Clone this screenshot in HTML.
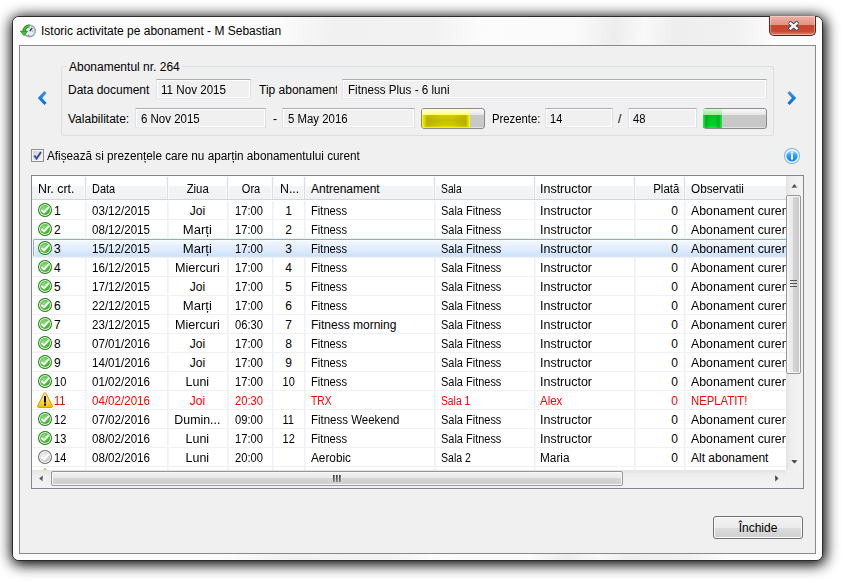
<!DOCTYPE html>
<html><head><meta charset="utf-8"><style>
*{margin:0;padding:0;box-sizing:border-box}
html,body{width:848px;height:581px;overflow:hidden;background:#fff;font-family:"Liberation Sans",sans-serif;font-size:12px;color:#000}
.a{position:absolute}
.t{position:absolute;line-height:14px;white-space:nowrap}
.tb{position:absolute;border:1px solid #abadb3;border-color:#abadb3 #dbdfe6 #e3e9ef #e2e3ea;background:#f0f0f0;box-shadow:inset 0 0 0 1px #fff}
.pb{position:absolute;border:1px solid #8a8a8a;border-radius:3px;background:linear-gradient(#fbfbfb 0,#f0f0f0 15%,#e4e4e4 31%,#cacaca 32%,#c6c6c6 92%,#eeeeee 100%);overflow:hidden}
.hs{position:absolute;top:177px;width:1px;height:22px;background:#dcdde0;box-shadow:-1px 0 0 #fafafa,1px 0 0 #fafafa}
.vg{position:absolute;width:1px;background:#eaf1fb}
.vg2{position:absolute;width:1px;background:#f6f6f6}
.hg{position:absolute;height:1px;background:#f0f0f0}
</style></head><body>

<div class="a" style="left:12px;top:16px;width:811px;height:545px;border-radius:7px;box-shadow:1px 2px 14px 2px rgba(0,0,0,1);background:#fbfbfb;border:1px solid #2c2c2c"></div>
<div class="a" style="left:13px;top:17px;width:809px;height:543px;border-radius:6px;background:linear-gradient(95deg,#fdfdfd 0px,#fcfcfc 260px,#f1f1f1 320px,#f2f2f2 420px,#fcfcfc 470px,#fbfbfb 560px,#ededed 600px,#f9f9f9 630px,#eeeeee 660px,#f1f1f1 720px,#fcfcfc 760px)"></div>
<svg class="a" style="left:19px;top:23px" width="17" height="17" viewBox="0 0 17 17">
<circle cx="10.6" cy="8" r="6.4" fill="#98a2ac"/><circle cx="10.6" cy="8" r="5" fill="#dcf0fb"/>
<path d="M10.8 8.2 L13.2 4.8" stroke="#2a2a2a" stroke-width="1.3"/><circle cx="9.6" cy="12.2" r="0.8" fill="#f05a28"/><circle cx="13.6" cy="8" r="0.7" fill="#f08050"/>
<path d="M10.4 3 A5.2 5.2 0 0 0 5 8.4" fill="none" stroke="#1f7d14" stroke-width="3.2"/>
<path d="M10.4 3 A5.2 5.2 0 0 0 5 8.4" fill="none" stroke="#49c032" stroke-width="1.8"/>
<path d="M1.4 8.2 L8.6 8.2 L5 12.6Z" fill="#4cc236" stroke="#1f7d14" stroke-width="0.8" stroke-linejoin="round"/>
</svg>
<div class="t" style="left:41px;top:24px;">Istoric activitate pe abonament - M Sebastian</div>
<div class="a" style="left:769px;top:16px;width:47px;height:20px;border:1px solid #5b2219;border-top:none;border-radius:0 0 5px 5px;background:linear-gradient(#eeb1a6 0%,#e29483 45%,#c8472d 50%,#c54a31 80%,#e58a72 100%);box-shadow:inset 0 0 0 1px rgba(255,255,255,0.35)"></div>
<svg class="a" style="left:787px;top:20px" width="14" height="12" viewBox="0 0 14 12"><path d="M3.6 3.4 L9.6 8.4 M9.6 3.4 L3.6 8.4" stroke="#3a465c" stroke-width="4.4" stroke-linecap="round"/><path d="M3.6 3.4 L9.6 8.4 M9.6 3.4 L3.6 8.4" stroke="#f6f6f6" stroke-width="2.5" stroke-linecap="square"/></svg>
<div class="a" style="left:19px;top:45px;width:797px;height:509px;border:1px solid #8a8a8a;background:#f0f0f0"></div>
<div class="a" style="left:61px;top:66px;width:713px;height:70px;border:1px solid #d5dfe5;border-radius:3px"></div>
<div class="a" style="left:67px;top:60px;width:115px;height:10px;background:#f0f0f0"></div>
<div class="t" style="left:69px;top:60px;">Abonamentul nr. 264</div>
<svg class="a" style="left:36px;top:90px" width="13" height="16" viewBox="0 0 13 16"><defs><linearGradient id="arl" x1="0" y1="0" x2="0" y2="1"><stop offset="0" stop-color="#5a8ccc"/><stop offset="0.5" stop-color="#0a80f4"/><stop offset="1" stop-color="#1a6fd8"/></linearGradient></defs><path d="M9.5 2 L4 8 L9.5 14" fill="none" stroke="url(#arl)" stroke-width="3.2"/></svg>
<svg class="a" style="left:785px;top:90px" width="13" height="16" viewBox="0 0 13 16"><defs><linearGradient id="arr" x1="0" y1="0" x2="0" y2="1"><stop offset="0" stop-color="#5a8ccc"/><stop offset="0.5" stop-color="#0a80f4"/><stop offset="1" stop-color="#1a6fd8"/></linearGradient></defs><path d="M3.5 2 L9 8 L3.5 14" fill="none" stroke="url(#arr)" stroke-width="3.2"/></svg>
<div class="t" style="left:68px;top:83px;">Data document</div>
<div class="tb" style="left:156px;top:79px;width:95px;height:20px"></div>
<div class="t" style="left:161px;top:83px;"><span style="display:inline-block;transform:scaleX(0.968);transform-origin:left">11 Nov 2015</span></div>
<div class="t" style="left:259px;top:83px;width:78px;overflow:hidden">Tip abonament</div>
<div class="tb" style="left:342px;top:79px;width:425px;height:20px"></div>
<div class="t" style="left:348px;top:83px;"><span style="display:inline-block;transform:scaleX(0.97);transform-origin:left">Fitness Plus - 6 luni</span></div>
<div class="t" style="left:68px;top:112px;">Valabilitate:</div>
<div class="tb" style="left:135px;top:108px;width:131px;height:20px"></div>
<div class="t" style="left:141px;top:112px;"><span style="display:inline-block;transform:scaleX(0.956);transform-origin:left">6 Nov 2015</span></div>
<div class="t" style="left:273px;top:112px;">-</div>
<div class="tb" style="left:282px;top:108px;width:133px;height:20px"></div>
<div class="t" style="left:288px;top:112px;"><span style="display:inline-block;transform:scaleX(0.95);transform-origin:left">5 May 2016</span></div>
<div class="pb" style="left:421px;top:108px;width:64px;height:21px"><div class="a" style="left:0;top:0;width:48px;height:19px;background:linear-gradient(#ffffd8 0,#ffffa0 20%,#ffff70 31%,#d2cc00 32%,#c4be00 60%,#d0ca00 88%,#ffff00 100%)"></div><div class="a" style="left:0;top:6px;width:48px;height:12px;background:linear-gradient(90deg,#ffff00 0,#f0ec00 1px,rgba(170,164,0,0.55) 5px,rgba(170,164,0,0.25) 12px,rgba(0,0,0,0) 20px,rgba(0,0,0,0) 30px,rgba(170,164,0,0.3) 38px,rgba(170,164,0,0.55) 44px,#f0ec00 47px,#ffff00 48px)"></div></div>
<div class="t" style="left:492px;top:112px;"><span style="display:inline-block;transform:scaleX(0.942);transform-origin:left">Prezente:</span></div>
<div class="tb" style="left:545px;top:108px;width:68px;height:20px"></div>
<div class="t" style="left:550px;top:112px;"><span style="display:inline-block;transform:scaleX(0.92);transform-origin:left">14</span></div>
<div class="t" style="left:618px;top:112px;">/</div>
<div class="tb" style="left:628px;top:108px;width:69px;height:20px"></div>
<div class="t" style="left:633px;top:112px;"><span style="display:inline-block;transform:scaleX(0.93);transform-origin:left">48</span></div>
<div class="pb" style="left:703px;top:108px;width:64px;height:21px;overflow:visible"><div class="a" style="left:-1px;top:0;width:19px;height:19px;border-radius:2px 0 0 2px;background:linear-gradient(#d8ffd8 0,#b0f4b0 15%,#a0e8a0 31%,#00c020 32%,#00cc24 60%,#00d028 85%,#20e840 100%)"></div><div class="a" style="left:-1px;top:6px;width:19px;height:13px;background:linear-gradient(90deg,#30e850 0,rgba(0,150,20,0.5) 3px,rgba(0,0,0,0) 7px,rgba(0,0,0,0) 12px,rgba(0,150,20,0.5) 16px,#30e850 19px)"></div></div>
<div class="a" style="left:31px;top:149px;width:13px;height:13px;border:1px solid #8e8f8f;background:linear-gradient(135deg,#cbcfd5,#f6f6f6);box-shadow:inset 0 0 0 1px #f4f4f4"></div>
<svg class="a" style="left:32px;top:150px" width="11" height="11" viewBox="0 0 11 11"><path d="M2.3 5.5 L4.5 8.5 L9 2" fill="none" stroke="#34489c" stroke-width="1.9"/></svg>
<div class="t" style="left:47px;top:149px;"><span style="display:inline-block;transform:scaleX(0.979);transform-origin:left">Afișează si prezențele care nu aparțin abonamentului curent</span></div>
<svg class="a" style="left:783px;top:147px" width="18" height="18" viewBox="0 0 18 18"><defs><linearGradient id="ig" x1="0" y1="0" x2="0" y2="1"><stop offset="0" stop-color="#b8e8ff"/><stop offset="0.45" stop-color="#2a9cff"/><stop offset="1" stop-color="#0a84f8"/></linearGradient></defs>
<circle cx="9" cy="9" r="8" fill="#7eaee6"/><circle cx="9" cy="9" r="7" fill="#fbfdff"/><circle cx="9" cy="9" r="5.6" fill="url(#ig)"/><rect x="8" y="7.2" width="2" height="5.4" fill="#fff"/><rect x="8" y="4.6" width="2" height="1.7" fill="#fff"/></svg>
<div class="a" style="left:31px;top:175px;width:773px;height:314px;border:1px solid #828790;background:#fff"></div>
<div class="a" style="left:32px;top:176px;width:754px;height:23px;background:linear-gradient(#ffffff 0,#ffffff 43%,#f3f4f6 44%,#f1f2f4 100%)"></div>
<div class="a" style="left:32px;top:199px;width:754px;height:1px;background:#d5d5d5"></div>
<div class="hs" style="left:85px"></div>
<div class="hs" style="left:167px"></div>
<div class="hs" style="left:227px"></div>
<div class="hs" style="left:272px"></div>
<div class="hs" style="left:304px"></div>
<div class="hs" style="left:434px"></div>
<div class="hs" style="left:534px"></div>
<div class="hs" style="left:634px"></div>
<div class="hs" style="left:684px"></div>
<div class="t" style="left:38px;top:182px;"><span style="display:inline-block;transform:scaleX(1.03);transform-origin:left">Nr. crt.</span></div>
<div class="t" style="left:92px;top:182px;"><span style="display:inline-block;transform:scaleX(0.91);transform-origin:left">Data</span></div>
<div class="t" style="left:168px;top:182px;width:60px;text-align:center"><span style="display:inline-block;transform:scaleX(0.946);transform-origin:center">Ziua</span></div>
<div class="t" style="left:228px;top:182px;width:46px;text-align:center"><span style="display:inline-block;transform:scaleX(0.92);transform-origin:center">Ora</span></div>
<div class="t" style="left:280px;top:182px;"><span style="display:inline-block;transform:scaleX(1.03);transform-origin:left">N...</span></div>
<div class="t" style="left:311px;top:182px;">Antrenament</div>
<div class="t" style="left:441px;top:182px;"><span style="display:inline-block;transform:scaleX(0.86);transform-origin:left">Sala</span></div>
<div class="t" style="left:540px;top:182px;"><span style="display:inline-block;transform:scaleX(1.04);transform-origin:left">Instructor</span></div>
<div class="t" style="left:636px;top:182px;width:43px;text-align:right"><span style="display:inline-block;transform:scaleX(0.955);transform-origin:right">Plată</span></div>
<div class="t" style="left:691px;top:182px;"><span style="display:inline-block;transform:scaleX(0.98);transform-origin:left">Observatii</span></div>
<div class="a" style="left:32px;top:200px;width:754px;height:270px;overflow:hidden">
<div class="hg" style="left:0;top:19px;width:754px"></div>
<div class="hg" style="left:0;top:38px;width:754px"></div>
<div class="hg" style="left:0;top:57px;width:754px"></div>
<div class="hg" style="left:0;top:76px;width:754px"></div>
<div class="hg" style="left:0;top:95px;width:754px"></div>
<div class="hg" style="left:0;top:114px;width:754px"></div>
<div class="hg" style="left:0;top:133px;width:754px"></div>
<div class="hg" style="left:0;top:152px;width:754px"></div>
<div class="hg" style="left:0;top:171px;width:754px"></div>
<div class="hg" style="left:0;top:190px;width:754px"></div>
<div class="hg" style="left:0;top:209px;width:754px"></div>
<div class="hg" style="left:0;top:228px;width:754px"></div>
<div class="hg" style="left:0;top:247px;width:754px"></div>
<div class="hg" style="left:0;top:266px;width:754px"></div>
<div class="hg" style="left:0;top:285px;width:754px"></div>
<div class="vg" style="left:53px;top:1px;height:269px"></div><div class="vg2" style="left:54px;top:1px;height:269px"></div>
<div class="vg" style="left:135px;top:1px;height:269px"></div><div class="vg2" style="left:136px;top:1px;height:269px"></div>
<div class="vg" style="left:195px;top:1px;height:269px"></div><div class="vg2" style="left:196px;top:1px;height:269px"></div>
<div class="vg" style="left:240px;top:1px;height:269px"></div><div class="vg2" style="left:241px;top:1px;height:269px"></div>
<div class="vg" style="left:272px;top:1px;height:269px"></div><div class="vg2" style="left:273px;top:1px;height:269px"></div>
<div class="vg" style="left:402px;top:1px;height:269px"></div><div class="vg2" style="left:403px;top:1px;height:269px"></div>
<div class="vg" style="left:502px;top:1px;height:269px"></div><div class="vg2" style="left:503px;top:1px;height:269px"></div>
<div class="vg" style="left:602px;top:1px;height:269px"></div><div class="vg2" style="left:603px;top:1px;height:269px"></div>
<div class="vg" style="left:652px;top:1px;height:269px"></div><div class="vg2" style="left:653px;top:1px;height:269px"></div>
<div class="a" style="left:1px;top:39px;width:754px;height:18px;border:1px solid #84acdd;border-bottom-color:#d6e6f8;border-right:none;border-radius:2px 0 0 2px;background:linear-gradient(#f4f9fe 0,#e6f0fd 40%,#cfe2fa 100%);box-shadow:inset 1px 1px 0 rgba(255,255,255,0.6)"></div>
<div class="a" style="left:6px;top:3px;width:14px;height:14px"><svg width="14" height="14" viewBox="0 0 14 14"><defs><radialGradient id="g0" cx="40%" cy="35%" r="70%"><stop offset="0" stop-color="#8fe07c"/><stop offset="1" stop-color="#38a828"/></radialGradient></defs><circle cx="7" cy="7" r="7" fill="#1f7d12"/><circle cx="7" cy="7" r="6" fill="#dff6d6"/><circle cx="7" cy="7" r="5" fill="url(#g0)"/><path d="M3.9 7.4 L6 9.4 L10.2 4.6" fill="none" stroke="#fff" stroke-width="2" stroke-linecap="round" stroke-linejoin="round"/></svg></div>
<div class="t" style="left:22px;top:4px;">1</div>
<div class="t" style="left:60px;top:4px;"><span style="display:inline-block;transform:scaleX(0.965);transform-origin:left">03/12/2015</span></div>
<div class="t" style="left:136px;top:4px;width:59px;text-align:center;">Joi</div>
<div class="t" style="left:195px;top:4px;width:44px;text-align:center;"><span style="display:inline-block;transform:scaleX(0.93);transform-origin:center">17:00</span></div>
<div class="t" style="left:241px;top:4px;width:31px;text-align:center;">1</div>
<div class="t" style="left:279px;top:4px;"><span style="display:inline-block;transform:scaleX(0.93);transform-origin:left">Fitness</span></div>
<div class="t" style="left:409px;top:4px;"><span style="display:inline-block;transform:scaleX(0.914);transform-origin:left">Sala Fitness</span></div>
<div class="t" style="left:508px;top:4px;"><span style="display:inline-block;transform:scaleX(1.04);transform-origin:left">Instructor</span></div>
<div class="t" style="left:604px;top:4px;width:42px;text-align:right;">0</div>
<div class="t" style="left:659px;top:4px;"><span style="display:inline-block;transform:scaleX(1.03);transform-origin:left">Abonament curent</span></div>
<div class="a" style="left:6px;top:22px;width:14px;height:14px"><svg width="14" height="14" viewBox="0 0 14 14"><defs><radialGradient id="g1" cx="40%" cy="35%" r="70%"><stop offset="0" stop-color="#8fe07c"/><stop offset="1" stop-color="#38a828"/></radialGradient></defs><circle cx="7" cy="7" r="7" fill="#1f7d12"/><circle cx="7" cy="7" r="6" fill="#dff6d6"/><circle cx="7" cy="7" r="5" fill="url(#g1)"/><path d="M3.9 7.4 L6 9.4 L10.2 4.6" fill="none" stroke="#fff" stroke-width="2" stroke-linecap="round" stroke-linejoin="round"/></svg></div>
<div class="t" style="left:22px;top:23px;">2</div>
<div class="t" style="left:60px;top:23px;"><span style="display:inline-block;transform:scaleX(0.965);transform-origin:left">08/12/2015</span></div>
<div class="t" style="left:136px;top:23px;width:59px;text-align:center;"><span style="display:inline-block;transform:scaleX(1.09);transform-origin:center">Marți</span></div>
<div class="t" style="left:195px;top:23px;width:44px;text-align:center;"><span style="display:inline-block;transform:scaleX(0.93);transform-origin:center">17:00</span></div>
<div class="t" style="left:241px;top:23px;width:31px;text-align:center;">2</div>
<div class="t" style="left:279px;top:23px;"><span style="display:inline-block;transform:scaleX(0.93);transform-origin:left">Fitness</span></div>
<div class="t" style="left:409px;top:23px;"><span style="display:inline-block;transform:scaleX(0.914);transform-origin:left">Sala Fitness</span></div>
<div class="t" style="left:508px;top:23px;"><span style="display:inline-block;transform:scaleX(1.04);transform-origin:left">Instructor</span></div>
<div class="t" style="left:604px;top:23px;width:42px;text-align:right;">0</div>
<div class="t" style="left:659px;top:23px;"><span style="display:inline-block;transform:scaleX(1.03);transform-origin:left">Abonament curent</span></div>
<div class="a" style="left:6px;top:41px;width:14px;height:14px"><svg width="14" height="14" viewBox="0 0 14 14"><defs><radialGradient id="g2" cx="40%" cy="35%" r="70%"><stop offset="0" stop-color="#8fe07c"/><stop offset="1" stop-color="#38a828"/></radialGradient></defs><circle cx="7" cy="7" r="7" fill="#1f7d12"/><circle cx="7" cy="7" r="6" fill="#dff6d6"/><circle cx="7" cy="7" r="5" fill="url(#g2)"/><path d="M3.9 7.4 L6 9.4 L10.2 4.6" fill="none" stroke="#fff" stroke-width="2" stroke-linecap="round" stroke-linejoin="round"/></svg></div>
<div class="t" style="left:22px;top:42px;">3</div>
<div class="t" style="left:60px;top:42px;"><span style="display:inline-block;transform:scaleX(0.965);transform-origin:left">15/12/2015</span></div>
<div class="t" style="left:136px;top:42px;width:59px;text-align:center;"><span style="display:inline-block;transform:scaleX(1.09);transform-origin:center">Marți</span></div>
<div class="t" style="left:195px;top:42px;width:44px;text-align:center;"><span style="display:inline-block;transform:scaleX(0.93);transform-origin:center">17:00</span></div>
<div class="t" style="left:241px;top:42px;width:31px;text-align:center;">3</div>
<div class="t" style="left:279px;top:42px;"><span style="display:inline-block;transform:scaleX(0.93);transform-origin:left">Fitness</span></div>
<div class="t" style="left:409px;top:42px;"><span style="display:inline-block;transform:scaleX(0.914);transform-origin:left">Sala Fitness</span></div>
<div class="t" style="left:508px;top:42px;"><span style="display:inline-block;transform:scaleX(1.04);transform-origin:left">Instructor</span></div>
<div class="t" style="left:604px;top:42px;width:42px;text-align:right;">0</div>
<div class="t" style="left:659px;top:42px;"><span style="display:inline-block;transform:scaleX(1.03);transform-origin:left">Abonament curent</span></div>
<div class="a" style="left:6px;top:60px;width:14px;height:14px"><svg width="14" height="14" viewBox="0 0 14 14"><defs><radialGradient id="g3" cx="40%" cy="35%" r="70%"><stop offset="0" stop-color="#8fe07c"/><stop offset="1" stop-color="#38a828"/></radialGradient></defs><circle cx="7" cy="7" r="7" fill="#1f7d12"/><circle cx="7" cy="7" r="6" fill="#dff6d6"/><circle cx="7" cy="7" r="5" fill="url(#g3)"/><path d="M3.9 7.4 L6 9.4 L10.2 4.6" fill="none" stroke="#fff" stroke-width="2" stroke-linecap="round" stroke-linejoin="round"/></svg></div>
<div class="t" style="left:22px;top:61px;">4</div>
<div class="t" style="left:60px;top:61px;"><span style="display:inline-block;transform:scaleX(0.965);transform-origin:left">16/12/2015</span></div>
<div class="t" style="left:136px;top:61px;width:59px;text-align:center;"><span style="display:inline-block;transform:scaleX(1.05);transform-origin:center">Miercuri</span></div>
<div class="t" style="left:195px;top:61px;width:44px;text-align:center;"><span style="display:inline-block;transform:scaleX(0.93);transform-origin:center">17:00</span></div>
<div class="t" style="left:241px;top:61px;width:31px;text-align:center;">4</div>
<div class="t" style="left:279px;top:61px;"><span style="display:inline-block;transform:scaleX(0.93);transform-origin:left">Fitness</span></div>
<div class="t" style="left:409px;top:61px;"><span style="display:inline-block;transform:scaleX(0.914);transform-origin:left">Sala Fitness</span></div>
<div class="t" style="left:508px;top:61px;"><span style="display:inline-block;transform:scaleX(1.04);transform-origin:left">Instructor</span></div>
<div class="t" style="left:604px;top:61px;width:42px;text-align:right;">0</div>
<div class="t" style="left:659px;top:61px;"><span style="display:inline-block;transform:scaleX(1.03);transform-origin:left">Abonament curent</span></div>
<div class="a" style="left:6px;top:79px;width:14px;height:14px"><svg width="14" height="14" viewBox="0 0 14 14"><defs><radialGradient id="g4" cx="40%" cy="35%" r="70%"><stop offset="0" stop-color="#8fe07c"/><stop offset="1" stop-color="#38a828"/></radialGradient></defs><circle cx="7" cy="7" r="7" fill="#1f7d12"/><circle cx="7" cy="7" r="6" fill="#dff6d6"/><circle cx="7" cy="7" r="5" fill="url(#g4)"/><path d="M3.9 7.4 L6 9.4 L10.2 4.6" fill="none" stroke="#fff" stroke-width="2" stroke-linecap="round" stroke-linejoin="round"/></svg></div>
<div class="t" style="left:22px;top:80px;">5</div>
<div class="t" style="left:60px;top:80px;"><span style="display:inline-block;transform:scaleX(0.965);transform-origin:left">17/12/2015</span></div>
<div class="t" style="left:136px;top:80px;width:59px;text-align:center;">Joi</div>
<div class="t" style="left:195px;top:80px;width:44px;text-align:center;"><span style="display:inline-block;transform:scaleX(0.93);transform-origin:center">17:00</span></div>
<div class="t" style="left:241px;top:80px;width:31px;text-align:center;">5</div>
<div class="t" style="left:279px;top:80px;"><span style="display:inline-block;transform:scaleX(0.93);transform-origin:left">Fitness</span></div>
<div class="t" style="left:409px;top:80px;"><span style="display:inline-block;transform:scaleX(0.914);transform-origin:left">Sala Fitness</span></div>
<div class="t" style="left:508px;top:80px;"><span style="display:inline-block;transform:scaleX(1.04);transform-origin:left">Instructor</span></div>
<div class="t" style="left:604px;top:80px;width:42px;text-align:right;">0</div>
<div class="t" style="left:659px;top:80px;"><span style="display:inline-block;transform:scaleX(1.03);transform-origin:left">Abonament curent</span></div>
<div class="a" style="left:6px;top:98px;width:14px;height:14px"><svg width="14" height="14" viewBox="0 0 14 14"><defs><radialGradient id="g5" cx="40%" cy="35%" r="70%"><stop offset="0" stop-color="#8fe07c"/><stop offset="1" stop-color="#38a828"/></radialGradient></defs><circle cx="7" cy="7" r="7" fill="#1f7d12"/><circle cx="7" cy="7" r="6" fill="#dff6d6"/><circle cx="7" cy="7" r="5" fill="url(#g5)"/><path d="M3.9 7.4 L6 9.4 L10.2 4.6" fill="none" stroke="#fff" stroke-width="2" stroke-linecap="round" stroke-linejoin="round"/></svg></div>
<div class="t" style="left:22px;top:99px;">6</div>
<div class="t" style="left:60px;top:99px;"><span style="display:inline-block;transform:scaleX(0.965);transform-origin:left">22/12/2015</span></div>
<div class="t" style="left:136px;top:99px;width:59px;text-align:center;"><span style="display:inline-block;transform:scaleX(1.09);transform-origin:center">Marți</span></div>
<div class="t" style="left:195px;top:99px;width:44px;text-align:center;"><span style="display:inline-block;transform:scaleX(0.93);transform-origin:center">17:00</span></div>
<div class="t" style="left:241px;top:99px;width:31px;text-align:center;">6</div>
<div class="t" style="left:279px;top:99px;"><span style="display:inline-block;transform:scaleX(0.93);transform-origin:left">Fitness</span></div>
<div class="t" style="left:409px;top:99px;"><span style="display:inline-block;transform:scaleX(0.914);transform-origin:left">Sala Fitness</span></div>
<div class="t" style="left:508px;top:99px;"><span style="display:inline-block;transform:scaleX(1.04);transform-origin:left">Instructor</span></div>
<div class="t" style="left:604px;top:99px;width:42px;text-align:right;">0</div>
<div class="t" style="left:659px;top:99px;"><span style="display:inline-block;transform:scaleX(1.03);transform-origin:left">Abonament curent</span></div>
<div class="a" style="left:6px;top:117px;width:14px;height:14px"><svg width="14" height="14" viewBox="0 0 14 14"><defs><radialGradient id="g6" cx="40%" cy="35%" r="70%"><stop offset="0" stop-color="#8fe07c"/><stop offset="1" stop-color="#38a828"/></radialGradient></defs><circle cx="7" cy="7" r="7" fill="#1f7d12"/><circle cx="7" cy="7" r="6" fill="#dff6d6"/><circle cx="7" cy="7" r="5" fill="url(#g6)"/><path d="M3.9 7.4 L6 9.4 L10.2 4.6" fill="none" stroke="#fff" stroke-width="2" stroke-linecap="round" stroke-linejoin="round"/></svg></div>
<div class="t" style="left:22px;top:118px;">7</div>
<div class="t" style="left:60px;top:118px;"><span style="display:inline-block;transform:scaleX(0.965);transform-origin:left">23/12/2015</span></div>
<div class="t" style="left:136px;top:118px;width:59px;text-align:center;"><span style="display:inline-block;transform:scaleX(1.05);transform-origin:center">Miercuri</span></div>
<div class="t" style="left:195px;top:118px;width:44px;text-align:center;"><span style="display:inline-block;transform:scaleX(0.93);transform-origin:center">06:30</span></div>
<div class="t" style="left:241px;top:118px;width:31px;text-align:center;">7</div>
<div class="t" style="left:279px;top:118px;">Fitness morning</div>
<div class="t" style="left:409px;top:118px;"><span style="display:inline-block;transform:scaleX(0.914);transform-origin:left">Sala Fitness</span></div>
<div class="t" style="left:508px;top:118px;"><span style="display:inline-block;transform:scaleX(1.04);transform-origin:left">Instructor</span></div>
<div class="t" style="left:604px;top:118px;width:42px;text-align:right;">0</div>
<div class="t" style="left:659px;top:118px;"><span style="display:inline-block;transform:scaleX(1.03);transform-origin:left">Abonament curent</span></div>
<div class="a" style="left:6px;top:136px;width:14px;height:14px"><svg width="14" height="14" viewBox="0 0 14 14"><defs><radialGradient id="g7" cx="40%" cy="35%" r="70%"><stop offset="0" stop-color="#8fe07c"/><stop offset="1" stop-color="#38a828"/></radialGradient></defs><circle cx="7" cy="7" r="7" fill="#1f7d12"/><circle cx="7" cy="7" r="6" fill="#dff6d6"/><circle cx="7" cy="7" r="5" fill="url(#g7)"/><path d="M3.9 7.4 L6 9.4 L10.2 4.6" fill="none" stroke="#fff" stroke-width="2" stroke-linecap="round" stroke-linejoin="round"/></svg></div>
<div class="t" style="left:22px;top:137px;">8</div>
<div class="t" style="left:60px;top:137px;"><span style="display:inline-block;transform:scaleX(0.965);transform-origin:left">07/01/2016</span></div>
<div class="t" style="left:136px;top:137px;width:59px;text-align:center;">Joi</div>
<div class="t" style="left:195px;top:137px;width:44px;text-align:center;"><span style="display:inline-block;transform:scaleX(0.93);transform-origin:center">17:00</span></div>
<div class="t" style="left:241px;top:137px;width:31px;text-align:center;">8</div>
<div class="t" style="left:279px;top:137px;"><span style="display:inline-block;transform:scaleX(0.93);transform-origin:left">Fitness</span></div>
<div class="t" style="left:409px;top:137px;"><span style="display:inline-block;transform:scaleX(0.914);transform-origin:left">Sala Fitness</span></div>
<div class="t" style="left:508px;top:137px;"><span style="display:inline-block;transform:scaleX(1.04);transform-origin:left">Instructor</span></div>
<div class="t" style="left:604px;top:137px;width:42px;text-align:right;">0</div>
<div class="t" style="left:659px;top:137px;"><span style="display:inline-block;transform:scaleX(1.03);transform-origin:left">Abonament curent</span></div>
<div class="a" style="left:6px;top:155px;width:14px;height:14px"><svg width="14" height="14" viewBox="0 0 14 14"><defs><radialGradient id="g8" cx="40%" cy="35%" r="70%"><stop offset="0" stop-color="#8fe07c"/><stop offset="1" stop-color="#38a828"/></radialGradient></defs><circle cx="7" cy="7" r="7" fill="#1f7d12"/><circle cx="7" cy="7" r="6" fill="#dff6d6"/><circle cx="7" cy="7" r="5" fill="url(#g8)"/><path d="M3.9 7.4 L6 9.4 L10.2 4.6" fill="none" stroke="#fff" stroke-width="2" stroke-linecap="round" stroke-linejoin="round"/></svg></div>
<div class="t" style="left:22px;top:156px;">9</div>
<div class="t" style="left:60px;top:156px;"><span style="display:inline-block;transform:scaleX(0.965);transform-origin:left">14/01/2016</span></div>
<div class="t" style="left:136px;top:156px;width:59px;text-align:center;">Joi</div>
<div class="t" style="left:195px;top:156px;width:44px;text-align:center;"><span style="display:inline-block;transform:scaleX(0.93);transform-origin:center">17:00</span></div>
<div class="t" style="left:241px;top:156px;width:31px;text-align:center;">9</div>
<div class="t" style="left:279px;top:156px;"><span style="display:inline-block;transform:scaleX(0.93);transform-origin:left">Fitness</span></div>
<div class="t" style="left:409px;top:156px;"><span style="display:inline-block;transform:scaleX(0.914);transform-origin:left">Sala Fitness</span></div>
<div class="t" style="left:508px;top:156px;"><span style="display:inline-block;transform:scaleX(1.04);transform-origin:left">Instructor</span></div>
<div class="t" style="left:604px;top:156px;width:42px;text-align:right;">0</div>
<div class="t" style="left:659px;top:156px;"><span style="display:inline-block;transform:scaleX(1.03);transform-origin:left">Abonament curent</span></div>
<div class="a" style="left:6px;top:174px;width:14px;height:14px"><svg width="14" height="14" viewBox="0 0 14 14"><defs><radialGradient id="g9" cx="40%" cy="35%" r="70%"><stop offset="0" stop-color="#8fe07c"/><stop offset="1" stop-color="#38a828"/></radialGradient></defs><circle cx="7" cy="7" r="7" fill="#1f7d12"/><circle cx="7" cy="7" r="6" fill="#dff6d6"/><circle cx="7" cy="7" r="5" fill="url(#g9)"/><path d="M3.9 7.4 L6 9.4 L10.2 4.6" fill="none" stroke="#fff" stroke-width="2" stroke-linecap="round" stroke-linejoin="round"/></svg></div>
<div class="t" style="left:22px;top:175px;"><span style="display:inline-block;transform:scaleX(0.92);transform-origin:left">10</span></div>
<div class="t" style="left:60px;top:175px;"><span style="display:inline-block;transform:scaleX(0.965);transform-origin:left">01/02/2016</span></div>
<div class="t" style="left:136px;top:175px;width:59px;text-align:center;"><span style="display:inline-block;transform:scaleX(1.04);transform-origin:center">Luni</span></div>
<div class="t" style="left:195px;top:175px;width:44px;text-align:center;"><span style="display:inline-block;transform:scaleX(0.93);transform-origin:center">17:00</span></div>
<div class="t" style="left:241px;top:175px;width:31px;text-align:center;"><span style="display:inline-block;transform:scaleX(0.92);transform-origin:center">10</span></div>
<div class="t" style="left:279px;top:175px;"><span style="display:inline-block;transform:scaleX(0.93);transform-origin:left">Fitness</span></div>
<div class="t" style="left:409px;top:175px;"><span style="display:inline-block;transform:scaleX(0.914);transform-origin:left">Sala Fitness</span></div>
<div class="t" style="left:508px;top:175px;"><span style="display:inline-block;transform:scaleX(1.04);transform-origin:left">Instructor</span></div>
<div class="t" style="left:604px;top:175px;width:42px;text-align:right;">0</div>
<div class="t" style="left:659px;top:175px;"><span style="display:inline-block;transform:scaleX(1.03);transform-origin:left">Abonament curent</span></div>
<div class="a" style="left:5px;top:192px;width:16px;height:16px"><svg width="16" height="16" viewBox="0 0 16 16"><defs><linearGradient id="wg10" x1="0" y1="0" x2="0" y2="1"><stop offset="0" stop-color="#fff8b0"/><stop offset="1" stop-color="#f2c200"/></linearGradient></defs><path d="M8 0.6 Q8.6 0.6 9 1.3 L15.4 14 Q15.7 15.2 14.6 15.4 L1.4 15.4 Q0.3 15.2 0.6 14 L7 1.3 Q7.4 0.6 8 0.6Z" fill="url(#wg10)" stroke="#d09a00" stroke-width="1"/><rect x="7" y="4" width="2" height="6.6" fill="#000"/><rect x="7" y="11.6" width="2" height="2" fill="#000"/></svg></div>
<div class="t" style="left:22px;top:194px;color:#ff0000;"><span style="display:inline-block;transform:scaleX(0.92);transform-origin:left">11</span></div>
<div class="t" style="left:60px;top:194px;color:#ff0000;"><span style="display:inline-block;transform:scaleX(0.965);transform-origin:left">04/02/2016</span></div>
<div class="t" style="left:136px;top:194px;width:59px;text-align:center;color:#ff0000;">Joi</div>
<div class="t" style="left:195px;top:194px;width:44px;text-align:center;color:#ff0000;"><span style="display:inline-block;transform:scaleX(0.93);transform-origin:center">20:30</span></div>

<div class="t" style="left:279px;top:194px;color:#ff0000;"><span style="display:inline-block;transform:scaleX(0.854);transform-origin:left">TRX</span></div>
<div class="t" style="left:409px;top:194px;color:#ff0000;"><span style="display:inline-block;transform:scaleX(0.858);transform-origin:left">Sala 1</span></div>
<div class="t" style="left:508px;top:194px;color:#ff0000;"><span style="display:inline-block;transform:scaleX(0.957);transform-origin:left">Alex</span></div>
<div class="t" style="left:604px;top:194px;width:42px;text-align:right;color:#ff0000;">0</div>
<div class="t" style="left:659px;top:194px;color:#ff0000;"><span style="display:inline-block;transform:scaleX(0.943);transform-origin:left">NEPLATIT!</span></div>
<div class="a" style="left:6px;top:212px;width:14px;height:14px"><svg width="14" height="14" viewBox="0 0 14 14"><defs><radialGradient id="g11" cx="40%" cy="35%" r="70%"><stop offset="0" stop-color="#8fe07c"/><stop offset="1" stop-color="#38a828"/></radialGradient></defs><circle cx="7" cy="7" r="7" fill="#1f7d12"/><circle cx="7" cy="7" r="6" fill="#dff6d6"/><circle cx="7" cy="7" r="5" fill="url(#g11)"/><path d="M3.9 7.4 L6 9.4 L10.2 4.6" fill="none" stroke="#fff" stroke-width="2" stroke-linecap="round" stroke-linejoin="round"/></svg></div>
<div class="t" style="left:22px;top:213px;"><span style="display:inline-block;transform:scaleX(0.92);transform-origin:left">12</span></div>
<div class="t" style="left:60px;top:213px;"><span style="display:inline-block;transform:scaleX(0.965);transform-origin:left">07/02/2016</span></div>
<div class="t" style="left:136px;top:213px;width:59px;text-align:center;"><span style="display:inline-block;transform:scaleX(1.03);transform-origin:center">Dumin...</span></div>
<div class="t" style="left:195px;top:213px;width:44px;text-align:center;"><span style="display:inline-block;transform:scaleX(0.93);transform-origin:center">09:00</span></div>
<div class="t" style="left:241px;top:213px;width:31px;text-align:center;"><span style="display:inline-block;transform:scaleX(0.92);transform-origin:center">11</span></div>
<div class="t" style="left:279px;top:213px;"><span style="display:inline-block;transform:scaleX(0.956);transform-origin:left">Fitness Weekend</span></div>
<div class="t" style="left:409px;top:213px;"><span style="display:inline-block;transform:scaleX(0.914);transform-origin:left">Sala Fitness</span></div>
<div class="t" style="left:508px;top:213px;"><span style="display:inline-block;transform:scaleX(1.04);transform-origin:left">Instructor</span></div>
<div class="t" style="left:604px;top:213px;width:42px;text-align:right;">0</div>
<div class="t" style="left:659px;top:213px;"><span style="display:inline-block;transform:scaleX(1.03);transform-origin:left">Abonament curent</span></div>
<div class="a" style="left:6px;top:231px;width:14px;height:14px"><svg width="14" height="14" viewBox="0 0 14 14"><defs><radialGradient id="g12" cx="40%" cy="35%" r="70%"><stop offset="0" stop-color="#8fe07c"/><stop offset="1" stop-color="#38a828"/></radialGradient></defs><circle cx="7" cy="7" r="7" fill="#1f7d12"/><circle cx="7" cy="7" r="6" fill="#dff6d6"/><circle cx="7" cy="7" r="5" fill="url(#g12)"/><path d="M3.9 7.4 L6 9.4 L10.2 4.6" fill="none" stroke="#fff" stroke-width="2" stroke-linecap="round" stroke-linejoin="round"/></svg></div>
<div class="t" style="left:22px;top:232px;"><span style="display:inline-block;transform:scaleX(0.92);transform-origin:left">13</span></div>
<div class="t" style="left:60px;top:232px;"><span style="display:inline-block;transform:scaleX(0.965);transform-origin:left">08/02/2016</span></div>
<div class="t" style="left:136px;top:232px;width:59px;text-align:center;"><span style="display:inline-block;transform:scaleX(1.04);transform-origin:center">Luni</span></div>
<div class="t" style="left:195px;top:232px;width:44px;text-align:center;"><span style="display:inline-block;transform:scaleX(0.93);transform-origin:center">17:00</span></div>
<div class="t" style="left:241px;top:232px;width:31px;text-align:center;"><span style="display:inline-block;transform:scaleX(0.92);transform-origin:center">12</span></div>
<div class="t" style="left:279px;top:232px;"><span style="display:inline-block;transform:scaleX(0.93);transform-origin:left">Fitness</span></div>
<div class="t" style="left:409px;top:232px;"><span style="display:inline-block;transform:scaleX(0.914);transform-origin:left">Sala Fitness</span></div>
<div class="t" style="left:508px;top:232px;"><span style="display:inline-block;transform:scaleX(1.04);transform-origin:left">Instructor</span></div>
<div class="t" style="left:604px;top:232px;width:42px;text-align:right;">0</div>
<div class="t" style="left:659px;top:232px;"><span style="display:inline-block;transform:scaleX(1.03);transform-origin:left">Abonament curent</span></div>
<div class="a" style="left:6px;top:250px;width:14px;height:14px"><svg width="14" height="14" viewBox="0 0 14 14"><defs><radialGradient id="gg" cx="40%" cy="35%" r="70%"><stop offset="0" stop-color="#f4f4f4"/><stop offset="1" stop-color="#c4c4c4"/></radialGradient></defs><circle cx="7" cy="7" r="7" fill="#6e6e6e"/><circle cx="7" cy="7" r="6" fill="#f6f6f6"/><circle cx="7" cy="7" r="5" fill="url(#gg)"/><path d="M3.8 7.2 L6 9.3 L10.3 4.6" fill="none" stroke="#fff" stroke-width="1.9" stroke-linecap="round" stroke-linejoin="round"/></svg></div>
<div class="t" style="left:22px;top:251px;"><span style="display:inline-block;transform:scaleX(0.92);transform-origin:left">14</span></div>
<div class="t" style="left:60px;top:251px;"><span style="display:inline-block;transform:scaleX(0.965);transform-origin:left">08/02/2016</span></div>
<div class="t" style="left:136px;top:251px;width:59px;text-align:center;"><span style="display:inline-block;transform:scaleX(1.04);transform-origin:center">Luni</span></div>
<div class="t" style="left:195px;top:251px;width:44px;text-align:center;"><span style="display:inline-block;transform:scaleX(0.93);transform-origin:center">20:00</span></div>

<div class="t" style="left:279px;top:251px;"><span style="display:inline-block;transform:scaleX(0.983);transform-origin:left">Aerobic</span></div>
<div class="t" style="left:409px;top:251px;"><span style="display:inline-block;transform:scaleX(0.879);transform-origin:left">Sala 2</span></div>
<div class="t" style="left:508px;top:251px;"><span style="display:inline-block;transform:scaleX(0.983);transform-origin:left">Maria</span></div>
<div class="t" style="left:604px;top:251px;width:42px;text-align:right;">0</div>
<div class="t" style="left:659px;top:251px;">Alt abonament</div>
<div class="a" style="left:5px;top:268px;width:16px;height:16px"><svg width="16" height="16" viewBox="0 0 16 16"><defs><linearGradient id="wg14" x1="0" y1="0" x2="0" y2="1"><stop offset="0" stop-color="#fff8b0"/><stop offset="1" stop-color="#f2c200"/></linearGradient></defs><path d="M8 0.6 Q8.6 0.6 9 1.3 L15.4 14 Q15.7 15.2 14.6 15.4 L1.4 15.4 Q0.3 15.2 0.6 14 L7 1.3 Q7.4 0.6 8 0.6Z" fill="url(#wg14)" stroke="#d09a00" stroke-width="1"/><rect x="7" y="4" width="2" height="6.6" fill="#000"/><rect x="7" y="11.6" width="2" height="2" fill="#000"/></svg></div>










</div>
<div class="a" style="left:786px;top:176px;width:17px;height:294px;background:linear-gradient(90deg,#e3e3e3 0,#eeeeee 30%,#f0f0f0 60%,#f3f3f3 100%)"></div>
<svg class="a" style="left:789px;top:182px" width="11" height="8" viewBox="0 0 11 8"><defs><linearGradient id="ag1" x1="0" y1="0" x2="1" y2="1"><stop offset="0" stop-color="#000"/><stop offset="1" stop-color="#9a9a9a"/></linearGradient></defs><path d="M2 6 L5.5 1.8 L9 6Z" fill="url(#ag1)" stroke="#fff" stroke-width="0.6" stroke-opacity="0.8"/></svg>
<div class="a" style="left:786px;top:195px;width:15px;height:179px;border:1px solid #979797;border-radius:2px;background:linear-gradient(90deg,#f4f4f4 0,#e8e8e8 45%,#d4d4d6 50%,#c8c8cc 100%);box-shadow:inset 0 0 0 1px #f8f8f8"></div>
<div class="a" style="left:790px;top:280px;width:7px;height:1px;background:#555"></div><div class="a" style="left:790px;top:283px;width:7px;height:1px;background:#555"></div><div class="a" style="left:790px;top:286px;width:7px;height:1px;background:#555"></div>
<svg class="a" style="left:789px;top:458px" width="11" height="8" viewBox="0 0 11 8"><defs><linearGradient id="ag2" x1="0" y1="0" x2="1" y2="1"><stop offset="0" stop-color="#000"/><stop offset="1" stop-color="#9a9a9a"/></linearGradient></defs><path d="M2 2 L9 2 L5.5 6Z" fill="url(#ag2)" stroke="#fff" stroke-width="0.6" stroke-opacity="0.8"/></svg>
<div class="a" style="left:32px;top:470px;width:754px;height:18px;background:linear-gradient(#e3e3e3 0,#eeeeee 30%,#f0f0f0 60%,#f3f3f3 100%)"></div>
<svg class="a" style="left:37px;top:473px" width="8" height="11" viewBox="0 0 8 11"><defs><linearGradient id="ag3" x1="0" y1="0" x2="1" y2="1"><stop offset="0" stop-color="#000"/><stop offset="1" stop-color="#9a9a9a"/></linearGradient></defs><path d="M6 2 L6 9 L2 5.5Z" fill="url(#ag3)" stroke="#fff" stroke-width="0.6" stroke-opacity="0.8"/></svg>
<svg class="a" style="left:773px;top:473px" width="8" height="11" viewBox="0 0 8 11"><defs><linearGradient id="ag4" x1="0" y1="0" x2="1" y2="1"><stop offset="0" stop-color="#000"/><stop offset="1" stop-color="#9a9a9a"/></linearGradient></defs><path d="M2 2 L2 9 L6 5.5Z" fill="url(#ag4)" stroke="#fff" stroke-width="0.6" stroke-opacity="0.8"/></svg>
<div class="a" style="left:51px;top:471px;width:572px;height:15px;border:1px solid #979797;border-radius:2px;background:linear-gradient(#f2f2f2 0,#e9e9e9 45%,#d6d6d6 50%,#cfcfcf 100%);box-shadow:inset 0 0 0 1px #f8f8f8"></div>
<div class="a" style="left:333px;top:475px;width:2px;height:7px;background:linear-gradient(90deg,#333 0,#333 50%,rgba(80,80,80,0.4) 100%);-webkit-mask:linear-gradient(#000,rgba(0,0,0,0.5))"></div><div class="a" style="left:336px;top:475px;width:2px;height:7px;background:linear-gradient(90deg,#333 0,#333 50%,rgba(80,80,80,0.4) 100%);-webkit-mask:linear-gradient(#000,rgba(0,0,0,0.5))"></div><div class="a" style="left:339px;top:475px;width:2px;height:7px;background:linear-gradient(90deg,#333 0,#333 50%,rgba(80,80,80,0.4) 100%);-webkit-mask:linear-gradient(#000,rgba(0,0,0,0.5))"></div>
<div class="a" style="left:786px;top:470px;width:17px;height:18px;background:#f0f0f0"></div>
<div class="a" style="left:713px;top:516px;width:90px;height:23px;border:1px solid #707070;border-radius:3px;background:linear-gradient(#f2f2f2 0,#ebebeb 50%,#dddddd 51%,#cfcfcf 100%);box-shadow:inset 0 0 0 1px #fcfcfc"></div>
<div class="t" style="left:713px;top:521px;width:90px;text-align:center">Închide</div>
</body></html>
